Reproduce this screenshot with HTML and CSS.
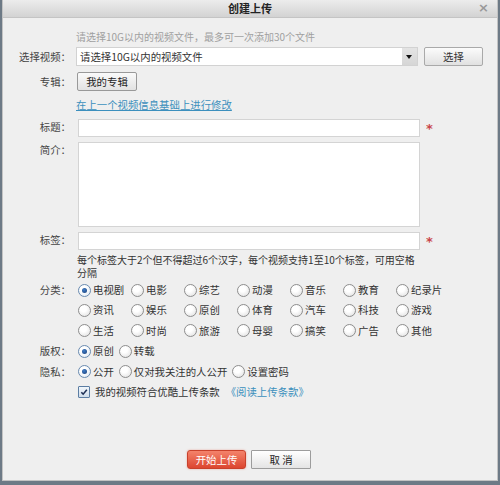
FILE: index.html
```html
<!DOCTYPE html>
<html lang="zh-CN">
<head>
<meta charset="utf-8">
<title>创建上传</title>
<link rel="stylesheet" href="styles.css">
</head>
<body>
<div class="dialog">
  <div class="titlebar">
    <span class="title">创建上传</span>
    <span class="close">×</span>
  </div>
  <div class="body">
    <div class="row hint-row">
      <span class="lbl"></span>
      <span class="hint">请选择10G以内的视频文件，最多可一次添加30个文件</span>
    </div>
    <div class="row select-row">
      <span class="lbl">选择视频：</span>
      <div class="select">
        <span class="select-text">请选择10G以内的视频文件</span>
        <span class="select-arrow"></span>
      </div>
      <span class="btn btn-choose">选择</span>
    </div>
    <div class="row album-row">
      <span class="lbl">专辑：</span>
      <span class="btn btn-album">我的专辑</span>
    </div>
    <div class="row link-row">
      <span class="lbl"></span>
      <a class="link">在上一个视频信息基础上进行修改</a>
    </div>
    <div class="row field-row title-row">
      <span class="lbl">标题：</span>
      <span class="input"></span>
      <span class="star">*</span>
    </div>
    <div class="row field-row desc-row">
      <span class="lbl">简介：</span>
      <span class="input textarea"></span>
    </div>
    <div class="row field-row tag-row">
      <span class="lbl">标签：</span>
      <span class="input"></span>
      <span class="star">*</span>
    </div>
    <div class="row help-row">
      <span class="lbl"></span>
      <p class="help">每个标签大于2个但不得超过6个汉字，每个视频支持1至10个标签，可用空格分隔</p>
    </div>
    <div class="row opt-row">
      <span class="lbl">分类：</span>
      <div class="cat-grid">
        <span class="opt"><span class="radio on"></span>电视剧</span>
        <span class="opt"><span class="radio"></span>电影</span>
        <span class="opt"><span class="radio"></span>综艺</span>
        <span class="opt"><span class="radio"></span>动漫</span>
        <span class="opt"><span class="radio"></span>音乐</span>
        <span class="opt"><span class="radio"></span>教育</span>
        <span class="opt"><span class="radio"></span>纪录片</span>
        <span class="opt"><span class="radio"></span>资讯</span>
        <span class="opt"><span class="radio"></span>娱乐</span>
        <span class="opt"><span class="radio"></span>原创</span>
        <span class="opt"><span class="radio"></span>体育</span>
        <span class="opt"><span class="radio"></span>汽车</span>
        <span class="opt"><span class="radio"></span>科技</span>
        <span class="opt"><span class="radio"></span>游戏</span>
        <span class="opt"><span class="radio"></span>生活</span>
        <span class="opt"><span class="radio"></span>时尚</span>
        <span class="opt"><span class="radio"></span>旅游</span>
        <span class="opt"><span class="radio"></span>母婴</span>
        <span class="opt"><span class="radio"></span>搞笑</span>
        <span class="opt"><span class="radio"></span>广告</span>
        <span class="opt"><span class="radio"></span>其他</span>
      </div>
    </div>
    <div class="row opt-row">
      <span class="lbl">版权：</span>
      <div class="inline-opts">
        <span class="opt"><span class="radio on"></span>原创</span>
        <span class="opt"><span class="radio"></span>转载</span>
      </div>
    </div>
    <div class="row opt-row">
      <span class="lbl">隐私：</span>
      <div class="inline-opts">
        <span class="opt"><span class="radio on"></span>公开</span>
        <span class="opt"><span class="radio"></span>仅对我关注的人公开</span>
        <span class="opt"><span class="radio"></span>设置密码</span>
      </div>
    </div>
    <div class="row opt-row">
      <span class="lbl"></span>
      <div class="inline-opts">
        <span class="opt"><span class="check"><svg viewBox="0 0 12 12" width="12" height="12"><path d="M2.8 6.2 L5 8.6 L9.4 3.4" fill="none" stroke="#1d2f55" stroke-width="1.9"/></svg></span>我的视频符合优酷上传条款</span>
        <a class="link terms">《阅读上传条款》</a>
      </div>
    </div>
    <div class="footer">
      <span class="btn btn-start">开始上传</span>
      <span class="btn btn-cancel">取 消</span>
    </div>
  </div>
</div>
</body>
</html>
```
FILE: styles.css
```css
html, body {
  margin: 0;
  padding: 0;
}
body {
  width: 500px;
  height: 485px;
  background: #6d7a86;
  font-family: "Noto Sans CJK SC", "Noto Sans", sans-serif;
  font-size: 10.4px;
  color: #333;
  overflow: hidden;
}
.dialog {
  margin-left: 2px;
  width: 494px;
  height: 480px;
  border: 1px solid #c3c3c3;
  border-top: none;
  background: #efefef;
}
.titlebar {
  height: 17px;
  border-bottom: 1px solid #c4c4c4;
  background: linear-gradient(#ececec, #d3d3d3);
  display: flex;
  align-items: center;
  justify-content: center;
  position: relative;
}
.title {
  font-weight: bold;
  font-size: 11px;
  color: #222;
  line-height: 17px;
}
.close {
  position: absolute;
  right: 8px;
  top: 0;
  line-height: 16px;
  font-size: 13px;
  font-weight: bold;
  color: #999;
  font-family: "DejaVu Sans", sans-serif;
}
.body {
  display: flex;
  flex-direction: column;
}
.row {
  display: flex;
  align-items: flex-start;
}
.lbl {
  flex: 0 0 68px;
  margin-right: 5px;
  text-align: right;
  color: #444;
  white-space: nowrap;
}
.hint-row {
  margin-top: 12px;
  line-height: 14px;
}
.hint {
  color: #a0a0a0;
  font-size: 10px;
}
.select-row {
  margin-top: 3px;
  align-items: center;
  height: 19px;
}
.select-row .lbl {
  line-height: 19px;
}
.select {
  width: 340px;
  height: 17px;
  border: 1px solid #d2d2d2;
  background: #fff;
  display: flex;
  align-items: stretch;
}
.select-text {
  flex: 1;
  padding-left: 3px;
  line-height: 17px;
  color: #333;
}
.select-arrow {
  width: 15px;
  background: linear-gradient(#e4e4e4, #d6d6d6);
  position: relative;
}
.select-arrow::after {
  content: "";
  position: absolute;
  left: 4px;
  top: 7px;
  border-left: 3.5px solid transparent;
  border-right: 3.5px solid transparent;
  border-top: 4px solid #111;
}
.btn {
  display: inline-flex;
  align-items: center;
  justify-content: center;
  box-sizing: border-box;
  white-space: nowrap;
}
.btn-choose {
  margin-left: 6px;
  width: 59px;
  height: 19px;
  border: 1px solid #a9a9a9;
  border-radius: 2px;
  background: linear-gradient(#fbfbfb, #e1e1e1);
  color: #333;
}
.album-row {
  margin-top: 6px;
  height: 19px;
}
.album-row .lbl {
  line-height: 19px;
}
.btn-album {
  margin-left: 1px;
  width: 60px;
  height: 19px;
  border: 1px solid #999;
  border-radius: 2px;
  background: linear-gradient(#fafafa, #e2e2e2);
  color: #222;
}
.link-row {
  margin-top: 7px;
  line-height: 14px;
}
.link {
  color: #3c8fbd;
  text-decoration: underline;
  white-space: nowrap;
}
.field-row .lbl {
  line-height: 16px;
}
.title-row {
  margin-top: 7px;
}
.input {
  display: block;
  margin-left: 2px;
  width: 340px;
  height: 16px;
  border: 1px solid #d4d4d4;
  background: #fff;
}
.textarea {
  height: 83px;
}
.desc-row {
  margin-top: 5px;
}
.tag-row {
  margin-top: 5px;
}
.star {
  margin-left: 6px;
  height: 18px;
  color: #c9464a;
  font-size: 13px;
  font-weight: bold;
  line-height: 19px;
  overflow: hidden;
  font-family: "DejaVu Sans", sans-serif;
}
.help-row {
  margin-top: 3px;
}
.help {
  margin: 0 0 0 1px;
  width: 345px;
  font-size: 10px;
  line-height: 13px;
  color: #333;
}
.opt-row {
  line-height: 20.4px;
}
.help-row + .opt-row {
  margin-top: 1px;
}
.cat-grid {
  margin-left: 2px;
  display: grid;
  grid-template-columns: repeat(7, 53px);
  grid-auto-rows: 20.4px;
}
.inline-opts {
  margin-left: 2px;
  display: flex;
  align-items: center;
  height: 20.4px;
}
.opt {
  display: inline-flex;
  align-items: center;
  white-space: nowrap;
  color: #333;
  margin-right: 5px;
}
.radio {
  flex: 0 0 auto;
  box-sizing: border-box;
  width: 13px;
  height: 13px;
  margin-right: 2px;
  border-radius: 50%;
  border: 1px solid #8e8e8e;
  background: radial-gradient(circle at 40% 35%, #ffffff 30%, #dcdcdc 100%);
  position: relative;
}
.radio.on {
  border-color: #6a8bb0;
  background: radial-gradient(circle at 40% 35%, #ffffff 30%, #d9e6f2 100%);
}
.radio.on::after {
  content: "";
  position: absolute;
  left: 3px;
  top: 3px;
  width: 5px;
  height: 5px;
  border-radius: 50%;
  background: radial-gradient(circle at 40% 35%, #3e7cc7, #1b3f78);
}
.check {
  flex: 0 0 auto;
  box-sizing: border-box;
  width: 12px;
  height: 12px;
  margin-right: 5px;
  border: 1px solid #5b7da3;
  border-radius: 1px;
  background: linear-gradient(#f1f6fb, #cfdcea);
  display: inline-flex;
  align-items: center;
  justify-content: center;
}
.check svg {
  display: block;
  width: 10px;
  height: 10px;
}
.terms {
  text-decoration: none;
  margin-left: 1px;
}
.footer {
  margin-top: 48px;
  display: flex;
  justify-content: center;
  gap: 5px;
  padding-right: 2px;
}
.btn-start {
  width: 59px;
  height: 19px;
  border: 1px solid #c9412b;
  border-radius: 3px;
  background: linear-gradient(#f4836b, #dc4630);
  color: #fff;
  box-shadow: 0 0 2px rgba(230, 110, 90, 0.6);
}
.btn-cancel {
  width: 60px;
  height: 19px;
  border: 1px solid #9c9c9c;
  border-radius: 1px;
  background: linear-gradient(#ffffff, #e4e4e4);
  color: #222;
}
```
